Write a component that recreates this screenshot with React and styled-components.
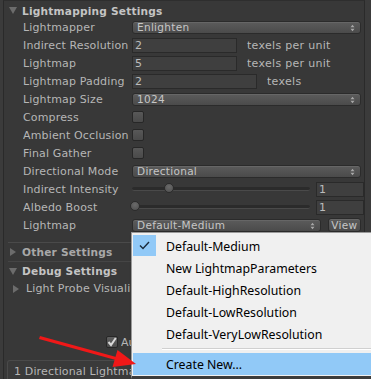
import React from 'react';
import styled, { createGlobalStyle } from 'styled-components';

const GlobalStyle = createGlobalStyle`
  html, body {
    margin: 0;
    padding: 0;
    background: #3b3b3b;
    overflow: hidden;
  }
`;

const Page = styled.div`
  position: relative;
  width: 371px;
  height: 379px;
  overflow: hidden;
  background: #3b3b3b;
  font-family: "DejaVu Sans", Verdana, sans-serif;
  font-size: 11px;
  color: #b6b6b6;
`;

const Panel = styled.div`
  margin-left: 3px;
  width: 362px;
  height: 379px;
  box-sizing: border-box;
  border-left: 1px solid #2a2a2a;
  border-right: 1px solid #2a2a2a;
  border-top: 1px solid #2e2e2e;
  background: #383838;
  display: flex;
  flex-direction: column;
`;

const Header = styled.div`
  display: flex;
  align-items: center;
  height: ${(p) => p.$h || 18}px;
  margin-top: ${(p) => p.$mt || 0}px;
  padding-left: 5px;
  gap: 3px;
  font-weight: bold;
  font-size: 10.6px;
  letter-spacing: 0.2px;
  color: ${(p) => (p.$dim ? '#a8a8a8' : '#c4c4c4')};
  white-space: nowrap;
`;

const Caret = styled.span`
  flex-shrink: 0;
  width: 0;
  height: 0;
  ${(p) =>
    p.$open
      ? `border-left: 4.5px solid transparent;
         border-right: 4.5px solid transparent;
         border-top: 7px solid #6c6c6c;
         margin-right: 2px;`
      : `border-top: 4.5px solid transparent;
         border-bottom: 4.5px solid transparent;
         border-left: 6px solid #6c6c6c;
         margin-left: 1px;
         margin-right: 3px;`}
`;

const Row = styled.div`
  display: flex;
  align-items: center;
  height: 18px;
  padding-left: 19px;
  padding-right: 3px;
  white-space: nowrap;
`;

const Label = styled.span`
  width: 109px;
  flex-shrink: 0;
  letter-spacing: 0.15px;
  overflow: hidden;
`;

const Dropdown = styled.div`
  position: relative;
  width: ${(p) => p.$w || 231}px;
  height: 13px;
  box-sizing: border-box;
  border: 1px solid #2b2b2b;
  border-radius: 3px;
  background: linear-gradient(#5b5b5b, #4b4b4b);
  box-shadow: inset 0 1px 0 #666;
  color: #c6c6c6;
  font-size: 10.5px;
  line-height: 11px;
  padding-left: 4px;
  letter-spacing: 0.3px;
`;

const Arrows = styled.svg`
  position: absolute;
  right: 5px;
  top: 2px;
`;

const TextField = styled.div`
  width: ${(p) => p.$w || 105}px;
  height: 15px;
  box-sizing: border-box;
  border: 1px solid #2a2a2a;
  background: #3f3f3f;
  color: #bcbcbc;
  font-size: 11px;
  line-height: 13px;
  padding-left: 2px;
  flex-shrink: 0;
`;

const Unit = styled.span`
  margin-left: 10px;
  letter-spacing: 0.3px;
`;

const Check = styled.div`
  width: 12px;
  height: 12px;
  box-sizing: border-box;
  border: 1px solid #272727;
  border-radius: 2px;
  background: linear-gradient(#585858, #4a4a4a);
  flex-shrink: 0;
`;

const SliderTrack = styled.div`
  position: relative;
  width: 178px;
  height: 3px;
  border-radius: 2px;
  background: #2b2b2b;
  border-bottom: 1px solid #4a4a4a;
  margin-right: 6px;
  flex-shrink: 0;
`;

const Thumb = styled.div`
  position: absolute;
  top: -4px;
  width: 10px;
  height: 10px;
  box-sizing: border-box;
  border-radius: 50%;
  border: 1px solid #2b2b2b;
  background: radial-gradient(circle at 50% 35%, #6a6a6a, #4e4e4e);
`;

const ValueField = styled(TextField)`
  width: 48px;
`;

const ViewButton = styled.div`
  margin-left: 7px;
  width: 34px;
  height: 14px;
  box-sizing: border-box;
  border: 1px solid #2b2b2b;
  border-radius: 3px;
  background: linear-gradient(#5b5b5b, #4b4b4b);
  box-shadow: inset 0 1px 0 #666;
  color: #c6c6c6;
  font-size: 10.5px;
  line-height: 12px;
  text-align: center;
  letter-spacing: 0.3px;
`;

const Divider = styled.div`
  height: 1px;
  margin-top: ${(p) => p.$mt || 0}px;
  margin-left: 4px;
  background: ${(p) => p.$c || '#4a4a4a'};
`;

const SubFold = styled.div`
  display: flex;
  align-items: center;
  height: 17px;
  padding-left: 8px;
  gap: 4px;
  white-space: nowrap;
  letter-spacing: 0.15px;
`;

/* text that runs under the open popup menu is cut at its left edge (x = 131) */
const Clipped = styled.span`
  display: block;
  max-width: ${(p) => p.$w}px;
  overflow: hidden;
  white-space: nowrap;
`;

const AutoRow = styled.div`
  display: flex;
  align-items: center;
  gap: 3px;
  height: 18px;
  margin-top: 36px;
  padding-left: 102px;
  white-space: nowrap;
`;

const AutoCheck = styled.div`
  width: 12px;
  height: 12px;
  flex-shrink: 0;
  box-sizing: border-box;
  border: 1px solid #272727;
  border-radius: 2px;
  background: linear-gradient(#5e5e5e, #4c4c4c);
  display: flex;
  align-items: center;
  justify-content: center;
`;

const InfoBox = styled.div`
  margin-top: 9px;
  margin-left: 3px;
  flex: 1;
  border: 1px solid #4a4a4a;
  border-bottom: none;
  border-radius: 3px 3px 0 0;
  background: #3a3a3a;
  padding: 4px 0 0 6px;
  letter-spacing: 0.15px;
  white-space: nowrap;
`;

const Popup = styled.div`
  position: absolute;
  left: 131px;
  top: 232px;
  width: 244px;
  height: 147px;
  box-sizing: border-box;
  border: 1px solid #9a9a9a;
  border-bottom: 3px solid #3c3c3c;
  background: #f0f0f0;
  padding: 2px 1px 0;
  font-family: "Noto Sans", "Open Sans", sans-serif;
  font-size: 12.3px;
  color: #000;
  box-shadow: 2px 2px 3px rgba(0, 0, 0, 0.4);
`;

const MenuItem = styled.div`
  position: relative;
  height: 22px;
  display: flex;
  align-items: center;
  padding-left: 33px;
  background: ${(p) => (p.$hl ? '#91c9f7' : 'transparent')};
  white-space: nowrap;
`;

const CheckCell = styled.div`
  position: absolute;
  left: 0;
  top: 0;
  width: 23px;
  height: 21px;
  background: #91c9f7;
  display: flex;
  align-items: center;
  justify-content: center;
`;

const MenuSep = styled.div`
  height: 1px;
  margin: 3px 0 3px 29px;
  background: #d0d0d0;
  border-bottom: 1px solid #fff;
`;

const ArrowSvg = styled.svg`
  position: absolute;
  left: 0;
  top: 0;
  pointer-events: none;
`;

const UpDown = () => (
  <Arrows width="5" height="8" viewBox="0 0 5 8">
    <path d="M0.5 3.2 L2.5 0.8 L4.5 3.2 Z M0.5 4.8 L2.5 7.2 L4.5 4.8 Z" fill="#a8a8a8" />
  </Arrows>
);

const menuItems = [
  'New LightmapParameters',
  'Default-HighResolution',
  'Default-LowResolution',
  'Default-VeryLowResolution',
];

const App = () => {
  return (
    <Page>
      <GlobalStyle />
      <Panel>
        <Header $mt={2} $h={15}>
          <Caret $open />
          Lightmapping Settings
        </Header>
        <Row>
          <Label>Lightmapper</Label>
          <Dropdown>Enlighten<UpDown /></Dropdown>
        </Row>
        <Row>
          <Label>Indirect Resolution</Label>
          <TextField>2</TextField>
          <Unit>texels per unit</Unit>
        </Row>
        <Row>
          <Label>Lightmap</Label>
          <TextField>5</TextField>
          <Unit>texels per unit</Unit>
        </Row>
        <Row>
          <Label>Lightmap Padding</Label>
          <TextField $w={125}>2</TextField>
          <Unit>texels</Unit>
        </Row>
        <Row>
          <Label>Lightmap Size</Label>
          <Dropdown>1024<UpDown /></Dropdown>
        </Row>
        <Row>
          <Label>Compress</Label>
          <Check />
        </Row>
        <Row>
          <Label>Ambient Occlusion</Label>
          <Check />
        </Row>
        <Row>
          <Label>Final Gather</Label>
          <Check />
        </Row>
        <Row>
          <Label>Directional Mode</Label>
          <Dropdown>Directional<UpDown /></Dropdown>
        </Row>
        <Row>
          <Label>Indirect Intensity</Label>
          <SliderTrack>
            <Thumb style={{ left: 32 }} />
          </SliderTrack>
          <ValueField>1</ValueField>
        </Row>
        <Row>
          <Label>Albedo Boost</Label>
          <SliderTrack>
            <Thumb style={{ left: -2 }} />
          </SliderTrack>
          <ValueField>1</ValueField>
        </Row>
        <Row>
          <Label>Lightmap</Label>
          <Dropdown $w={192}>Default-Medium<UpDown /></Dropdown>
          <ViewButton>View</ViewButton>
        </Row>
        <Divider $mt={8} />
        <Header $dim>
          <Caret />
          Other Settings
        </Header>
        <Divider $c="#454545" />
        <Header>
          <Caret $open />
          Debug Settings
        </Header>
        <SubFold>
          <Caret />
          <Clipped $w={104}>Light Probe Visualization</Clipped>
        </SubFold>
        <AutoRow>
          <AutoCheck>
            <svg width="10" height="10" viewBox="0 0 10 10">
              <path d="M1.5 5 L4 8 L8.8 1" stroke="#d8d8d8" strokeWidth="2" fill="none" />
            </svg>
          </AutoCheck>
          <Clipped $w={11}>Auto Generate</Clipped>
        </AutoRow>
        <InfoBox>
          <Clipped $w={117}>1 Directional Lightmaps | 1024x1024px</Clipped>
        </InfoBox>
      </Panel>

      <Popup>
        <MenuItem>
          <CheckCell>
            <svg width="11" height="9" viewBox="0 0 11 9">
              <path d="M1 4.5 L4 7.5 L10 1" stroke="#1a2a3a" strokeWidth="1.4" fill="none" />
            </svg>
          </CheckCell>
          Default-Medium
        </MenuItem>
        {menuItems.map((item) => (
          <MenuItem key={item}>{item}</MenuItem>
        ))}
        <MenuSep />
        <MenuItem $hl>Create New...</MenuItem>
      </Popup>

      <ArrowSvg width="371" height="379" viewBox="0 0 371 379">
        <path d="M40 336 L118 357.5 L117.5 360.5 L39 339 Z" fill="#f01818" />
        <path d="M136 364 L117.5 350 L112.5 367 Z" fill="#f01818" />
      </ArrowSvg>
    </Page>
  );
};

export default App;
